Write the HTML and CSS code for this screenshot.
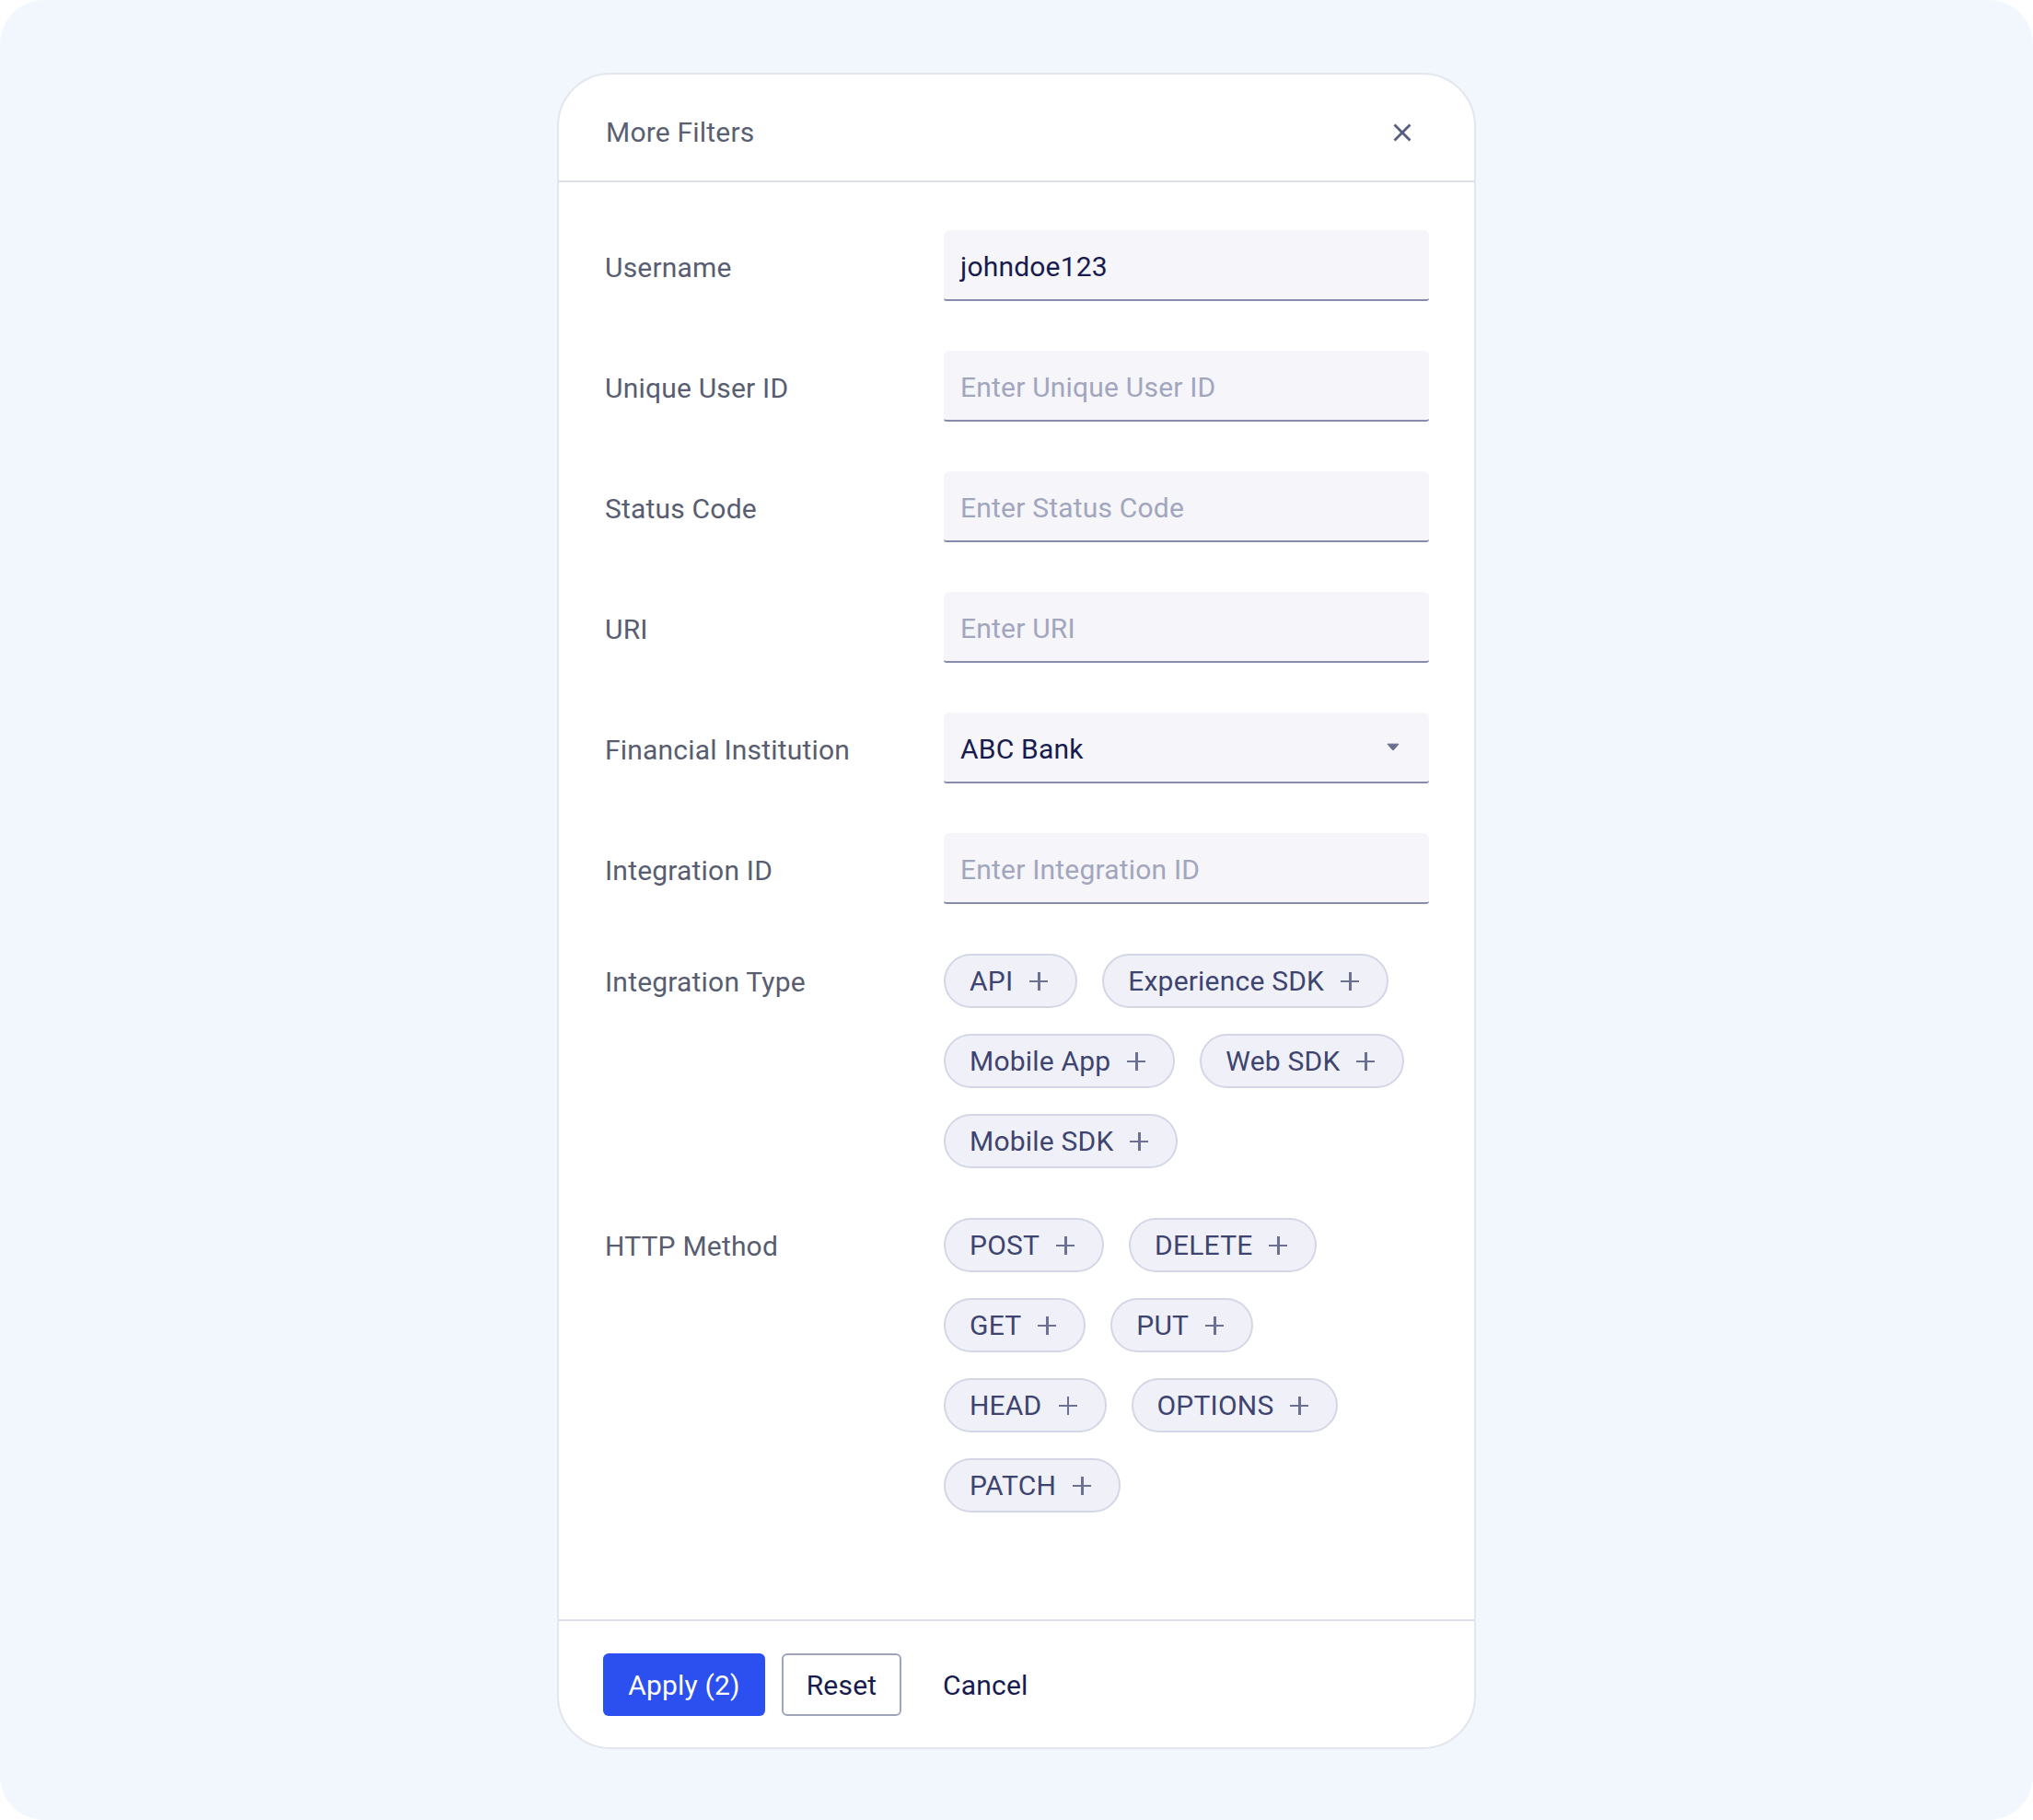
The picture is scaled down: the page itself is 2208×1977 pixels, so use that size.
FILE: index.html
```html
<!DOCTYPE html>
<html lang="en">
<head>
<meta charset="utf-8">
<title>More Filters</title>
<link rel="stylesheet" href="styles.css">
</head>
<body>
<div class="frame">
  <div class="modal">
    <div class="modal-header">
      <h2 class="modal-title">More Filters</h2>
      <button class="close-btn" aria-label="Close">
        <svg width="20" height="20" viewBox="0 0 20 20"><path d="M1.5 1.5 L18.5 18.5 M18.5 1.5 L1.5 18.5" stroke="#565c82" stroke-width="2.8" stroke-linecap="butt" fill="none"/></svg>
      </button>
    </div>
    <div class="modal-body">
      <div class="field-label">Username</div>
      <div class="input"><span class="value">johndoe123</span></div>

      <div class="field-label">Unique User ID</div>
      <div class="input"><span class="placeholder">Enter Unique User ID</span></div>

      <div class="field-label">Status Code</div>
      <div class="input"><span class="placeholder">Enter Status Code</span></div>

      <div class="field-label">URI</div>
      <div class="input"><span class="placeholder">Enter URI</span></div>

      <div class="field-label">Financial Institution</div>
      <div class="input select"><span class="value">ABC Bank</span>
        <svg class="caret" width="14" height="9" viewBox="0 0 14 9"><path d="M1 1.2 H13 L7.6 7.6 Q7 8.2 6.4 7.6 Z" fill="#6a6f92" stroke="#6a6f92" stroke-width="1" stroke-linejoin="round"/></svg>
      </div>

      <div class="field-label">Integration ID</div>
      <div class="input"><span class="placeholder">Enter Integration ID</span></div>

      <div class="field-label top">Integration Type</div>
      <div class="chips">
        <span class="chip">API<i class="plus"></i></span>
        <span class="chip">Experience SDK<i class="plus"></i></span>
        <span class="chip">Mobile App<i class="plus"></i></span>
        <span class="chip">Web SDK<i class="plus"></i></span>
        <span class="chip">Mobile SDK<i class="plus"></i></span>
      </div>

      <div class="field-label top">HTTP Method</div>
      <div class="chips">
        <span class="chip">POST<i class="plus"></i></span>
        <span class="chip">DELETE<i class="plus"></i></span>
        <span class="chip">GET<i class="plus"></i></span>
        <span class="chip">PUT<i class="plus"></i></span>
        <span class="chip">HEAD<i class="plus"></i></span>
        <span class="chip">OPTIONS<i class="plus"></i></span>
        <span class="chip">PATCH<i class="plus"></i></span>
      </div>
    </div>
    <div class="modal-footer">
      <button class="btn btn-primary">Apply (2)</button>
      <button class="btn btn-outline">Reset</button>
      <button class="btn btn-ghost">Cancel</button>
    </div>
  </div>
</div>
</body>
</html>
```

FILE: styles.css
```css
* { box-sizing: border-box; }
html, body { margin: 0; padding: 0; background: #ffffff; }
body {
  font-family: Roboto, "Noto Sans", "Liberation Sans", sans-serif;
  width: 2208px;
  height: 1977px;
}
.frame {
  width: 2208px;
  height: 1977px;
  background: #f2f6fd;
  border-radius: 48px;
  display: flex;
  justify-content: center;
  align-items: flex-start;
  padding-top: 79px;
}
.modal {
  width: 998px;
  background: #ffffff;
  border: 2px solid #e3e6ed;
  border-radius: 58px;
  display: flex;
  flex-direction: column;
}
.modal-header {
  height: 117px;
  border-bottom: 2px solid #dcdfe8;
  display: flex;
  align-items: center;
  justify-content: space-between;
  padding: 10px 68px 0 51px;
}
.modal-title {
  margin: 0;
  font-weight: 400;
  font-size: 30px;
  color: #5a5f72;
  letter-spacing: 0.2px;
}
.close-btn {
  background: none;
  border: none;
  padding: 0;
  width: 20px;
  height: 20px;
  display: flex;
}
.modal-body {
  display: grid;
  grid-template-columns: 368px 527px;
  row-gap: 54px;
  padding: 52px 48px 116px 50px;
  align-items: center;
}
.field-label {
  font-size: 30px;
  color: #585d70;
  letter-spacing: 0.2px;
  padding-top: 3px;
}
.field-label.top {
  align-self: start;
  padding-top: 13px;
}
.input {
  height: 77px;
  background: #f5f5fa;
  border-bottom: 2px solid #878cac;
  border-radius: 6px 6px 3px 3px;
  display: flex;
  align-items: center;
  padding: 3px 18px 0;
  font-size: 30px;
  letter-spacing: 0.2px;
}
.input .value { color: #171b4e; }
.input .placeholder { color: #a2a6bd; }
.input.select { justify-content: space-between; padding-right: 32px; }
.caret { display: block; margin-top: -4px; }
.chips {
  display: flex;
  flex-wrap: wrap;
  column-gap: 27px;
  row-gap: 28px;
}
.chip {
  height: 59px;
  display: inline-flex;
  align-items: center;
  padding: 0 30px 0 26px;
  background: #f0f1f8;
  border: 2px solid #d4d6e6;
  border-radius: 30px;
  color: #3e4470;
  font-size: 30px;
  letter-spacing: 0.2px;
}
.plus {
  position: relative;
  display: inline-block;
  width: 20px;
  height: 20px;
  margin-left: 18px;
}
.plus::before, .plus::after {
  content: "";
  position: absolute;
  background: #6c7193;
}
.plus::before { left: 0; right: 0; top: 9px; height: 2.5px; }
.plus::after { top: 0; bottom: 0; left: 9px; width: 2.5px; }
.modal-footer {
  border-top: 2px solid #dcdfe8;
  display: flex;
  align-items: center;
  gap: 18px;
  padding: 35px 48px 34px 48px;
}
.btn {
  height: 68px;
  font-family: inherit;
  font-size: 30px;
  letter-spacing: 0.2px;
  border-radius: 6px;
  padding: 0 18px;
  cursor: pointer;
}
.btn-primary {
  width: 176px;
  background: #2c50ef;
  color: #ffffff;
  border: none;
}
.btn-outline {
  width: 130px;
  background: #ffffff;
  color: #171b4e;
  border: 2px solid #a0a4bb;
}
.btn-ghost {
  background: none;
  border: none;
  color: #171b4e;
  padding: 0 27px;
}
```
